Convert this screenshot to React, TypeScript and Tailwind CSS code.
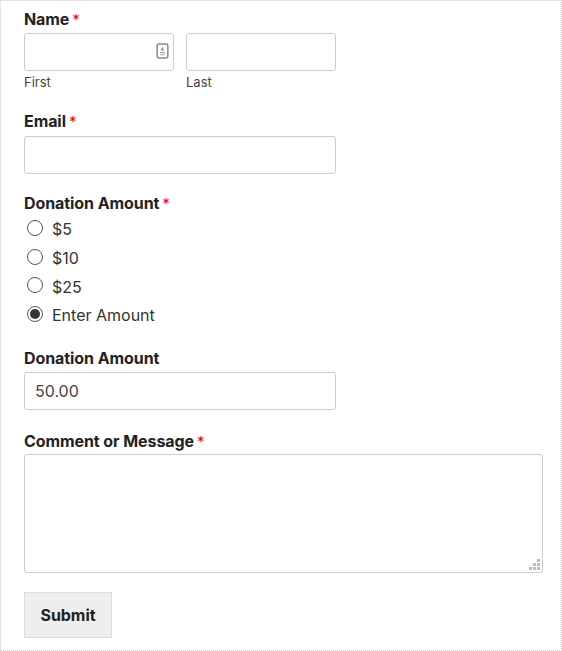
const font = { fontFamily: 'Inter, sans-serif' };

function Label({ text, required }: { text: string; required?: boolean }) {
  return (
    <div className="text-[16px] font-bold leading-[20px] tracking-[-0.08px] text-[#222]">
      {text}
      {required && <span className="ml-[3px] text-[15px] font-normal leading-none text-[#ff0000]">*</span>}
    </div>
  );
}

function Field({ value, className }: { value?: string; className?: string }) {
  return (
    <div
      className={`flex h-[38px] items-center rounded-[3px] border border-[#ccc] bg-white px-[10px] text-[16px] text-[#444] ${className ?? ""}`}
    >
      {value}
    </div>
  );
}

function Radio({ label, checked }: { label: string; checked?: boolean }) {
  return (
    <div className="flex h-[28.7px] items-center gap-[9px] pl-[3px] text-[16px] text-[#333]">
      <span className="mb-[3px] flex size-[16px] items-center justify-center rounded-full border border-[#555] bg-white">
        {checked && <span className="size-[10px] rounded-full bg-[#333]" />}
      </span>
      <span>{label}</span>
    </div>
  );
}

export default function App() {
  return (
    <div
      style={font}
      className="h-[651px] w-[562px] border border-dotted border-[#ccc] bg-white pl-[23px] pr-[18px] pt-[8px]"
    >
      <Label text="Name" required />
      <div className="mt-[4px] flex gap-[12px]">
        <div className="w-[150px]">
          <div className="relative">
            <Field />
            <svg className="absolute right-[5px] top-[10px]" width="13" height="16" viewBox="0 0 12 15" fill="none">
              <rect x="1" y="1" width="10" height="13" rx="1.5" stroke="#888" strokeWidth="1.4" />
              <path d="M6 3.5 7.5 7h-3z" fill="#888" />
              <path d="M3.5 9h5M3.5 11h5" stroke="#aaa" />
            </svg>
          </div>
          <div className="mt-[2px] text-[13px] leading-[18px] text-[#444]">First</div>
        </div>
        <div className="w-[150px]">
          <Field />
          <div className="mt-[2px] text-[13px] leading-[18px] text-[#444]">Last</div>
        </div>
      </div>

      <div className="mt-[20px]">
        <Label text="Email" required />
        <Field className="mt-[5px] w-[312px]" />
      </div>

      <div className="mt-[19px]">
        <Label text="Donation Amount" required />
        <div className="mt-[2px]">
          <Radio label="$5" />
          <Radio label="$10" />
          <Radio label="$25" />
          <Radio label="Enter Amount" checked />
        </div>
      </div>

      <div className="mt-[18px]">
        <Label text="Donation Amount" />
        <Field value="50.00" className="mt-[4px] w-[312px]" />
      </div>

      <div className="mt-[21px]">
        <Label text="Comment or Message" required />
        <div className="relative mt-[3px] h-[119px] w-[519px] rounded-[3px] border border-[#ccc] bg-white">
          <svg className="absolute bottom-[2px] right-[2px]" width="11" height="11" viewBox="0 0 11 11" fill="#bbb">
            <rect x="8" y="0" width="3" height="3" />
            <rect x="4" y="4" width="3" height="3" />
            <rect x="8" y="4" width="3" height="3" />
            <rect x="0" y="8" width="3" height="3" />
            <rect x="4" y="8" width="3" height="3" />
            <rect x="8" y="8" width="3" height="3" />
          </svg>
        </div>
      </div>

      <button
        type="button"
        className="mt-[19px] h-[46px] w-[88px] border border-[#ddd] bg-[#eeeeee] text-[16px] font-bold tracking-[-0.08px] text-[#222]"
      >
        Submit
      </button>
    </div>
  );
}
